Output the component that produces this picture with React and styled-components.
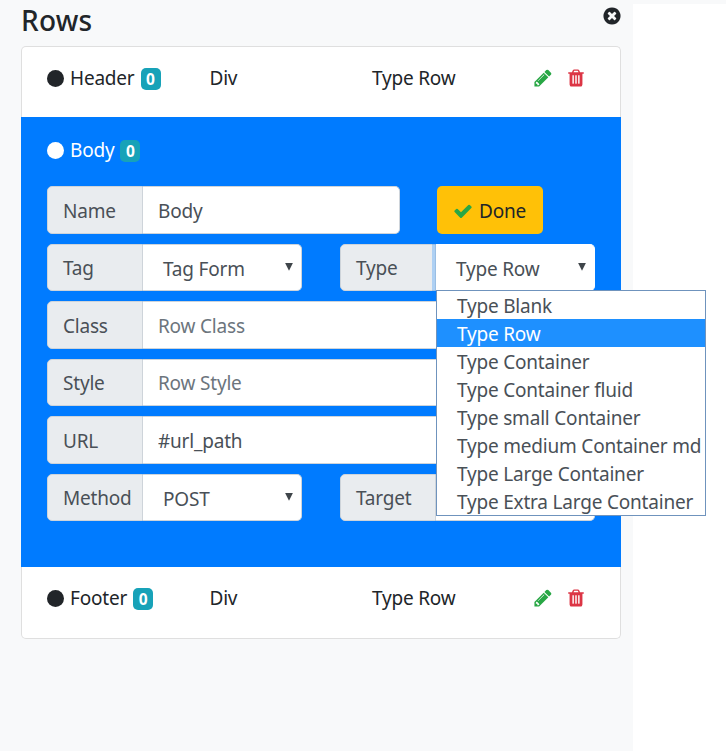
import styled, { createGlobalStyle, css } from "styled-components";

const GlobalStyle = createGlobalStyle`
  * {
    box-sizing: border-box;
  }

  body {
    margin: 0;
    background: #fff;
    border-top: 4px solid #f8f9fa;
    overflow: hidden;
    color: #212529;
    font-family: "Noto Sans", "Open Sans", sans-serif;
    font-size: 19px;
    line-height: 30px;
    letter-spacing: -0.2px;
  }
`;

// Light sidebar that holds the list of rows
const Panel = styled.aside`
  width: 633px;
  height: 747px;
  padding: 0 12px 0 21px;
  background: #f8f9fa;
`;

const PanelHead = styled.header`
  display: flex;
  justify-content: space-between;
  height: 42px;
  padding-top: 2px;
`;

const Title = styled.h4`
  margin: 0;
  font-size: 28px;
  font-weight: 500;
  line-height: 28px;
  letter-spacing: 0.2px;
`;

const Glyph = styled.svg`
  display: block;
  flex: none;
  width: 20px;
  height: 20px;
  fill: ${(props) => props.$color || "currentColor"};
`;

const IconButton = styled.button`
  display: block;
  margin: 0;
  padding: 0;
  border: 0;
  background: none;
  color: inherit;
`;

const CloseButton = styled(IconButton)`
  align-self: flex-start;
  margin-right: -1px;
`;

const List = styled.ul`
  margin: 0;
  padding: 0;
  list-style: none;
`;

const Item = styled.li`
  height: 72px;
  padding: 16px 25px;
  background: #fff;
  border: 1px solid #dfdfdf;

  &:first-child {
    height: 71px;
    border-bottom: 0;
    border-radius: 5px 5px 0 0;
  }

  &:last-child {
    border-top: 0;
    border-radius: 0 0 5px 5px;
  }

  ${(props) =>
    props.$active &&
    css`
      height: 450px;
      padding: 17px 25px;
      background: #007bff;
      border-color: #007bff;
      color: #fff;
    `}
`;

const Summary = styled.div`
  display: grid;
  grid-template-columns: 162.5px 162.5px 161px 33px 1fr;
  align-items: center;
  height: 30px;
`;

const Name = styled.div`
  display: flex;
  align-items: center;
`;

const Dot = styled.span`
  width: 17px;
  height: 17px;
  margin-right: 6px;
  border-radius: 50%;
  background: currentColor;
`;

const Badge = styled.span`
  width: 20px;
  height: 22px;
  margin: 2px 0 0 6px;
  border-radius: 5px;
  background: #17a2b8;
  color: #fff;
  font-size: 15.5px;
  font-weight: 700;
  line-height: 22px;
  text-align: center;
  letter-spacing: 0;
`;

const Form = styled.form`
  display: flex;
  flex-direction: column;
  gap: 10px;
  margin-top: 21px;
`;

const FormLine = styled.div`
  display: flex;
  gap: ${(props) => props.$gap || 38}px;
`;

const Group = styled.div`
  position: relative;
  display: flex;
  flex: ${(props) => (props.$width ? "none" : 1)};
  width: ${(props) => (props.$width ? `${props.$width}px` : "auto")};
  height: 47.5px;
`;

const Label = styled.label`
  display: flex;
  align-items: center;
  flex: none;
  width: 96px;
  padding: 2px 0 0 15px;
  border: 1px solid #ced4da;
  border-radius: 5px 0 0 5px;
  background: #e9ecef;
  color: #495057;
`;

const Input = styled.input`
  flex: 1;
  min-width: 0;
  padding: 2px 15px 0;
  border: 1px solid #ced4da;
  border-left: 0;
  border-radius: 0 5px 5px 0;
  background: #fff;
  color: #495057;
  font: inherit;
  letter-spacing: inherit;

  &::placeholder {
    color: #6c757d;
    opacity: 1;
  }
`;

// Closed select box, ringed while its menu is open
const Select = styled.div`
  display: flex;
  flex: 1;
  align-items: center;
  justify-content: space-between;
  padding: 3px 8px 0 20px;
  border: 1px solid ${(props) => (props.$open ? "#fff" : "#ced4da")};
  border-left: 0;
  border-radius: 0 5px 5px 0;
  background: #fff;
  color: #495057;
  box-shadow: ${(props) => (props.$open ? "0 0 0 4px rgba(0, 123, 255, 0.25)" : "none")};
`;

const Arrow = styled.span`
  width: 8px;
  height: 8px;
  margin-top: -4px;
  background: #3f454a;
  clip-path: polygon(0 0, 100% 0, 50% 100%);
`;

const Done = styled.button`
  display: flex;
  align-items: center;
  gap: 6px;
  width: 106px;
  height: 47.5px;
  margin: 0;
  padding: 2px 0 0 16px;
  border: 0;
  border-radius: 5px;
  background: #ffc107;
  color: #212529;
  font: inherit;
  letter-spacing: inherit;
`;

const Menu = styled.ul`
  position: absolute;
  z-index: 2;
  top: 46px;
  left: 96px;
  width: 270px;
  margin: 0;
  padding: 0;
  border: 1px solid #6f93bd;
  background: #fff;
  color: #495057;
  list-style: none;
`;

const Option = styled.li`
  height: 28px;
  padding: 1px 0 0 20px;
  line-height: 28px;
  white-space: nowrap;
  ${(props) => props.$selected && "background: #1e90ff; color: #fff;"}
`;

const paths = {
  close:
    "M1277 1122q0-26-19-45l-181-181 181-181q19-19 19-45 0-27-19-46l-90-90q-19-19-46-19-26 0-45 19l-181 181-181-181q-19-19-45-19-27 0-46 19l-90 90q-19 19-19 46 0 26 19 45l181 181-181 181q-19 19-19 45 0 27 19 46l90 90q19 19 46 19 26 0 45-19l181-181 181 181q19 19 45 19 27 0 46-19l90-90q19-19 19-46zm387-226q0 209-103 385.5t-279.5 279.5-385.5 103-385.5-103-279.5-279.5-103-385.5 103-385.5 279.5-279.5 385.5-103 385.5 103 279.5 279.5 103 385.5z",
  pencil:
    "M491 1536l91-91-235-235-91 91v107h128v128h107zm523-928q0-22-22-22-10 0-17 7l-542 542q-7 7-7 17 0 22 22 22 10 0 17-7l542-542q7-7 7-17zm-54-192l416 416-832 832h-416v-416zm683 96q0 53-37 90l-166 166-416-416 166-165q36-38 90-38 53 0 91 38l235 234q37 39 37 91z",
  trash:
    "M704 1376v-704q0-14-9-23t-23-9h-64q-14 0-23 9t-9 23v704q0 14 9 23t23 9h64q14 0 23-9t9-23zm256 0v-704q0-14-9-23t-23-9h-64q-14 0-23 9t-9 23v704q0 14 9 23t23 9h64q14 0 23-9t9-23zm256 0v-704q0-14-9-23t-23-9h-64q-14 0-23 9t-9 23v704q0 14 9 23t23 9h64q14 0 23-9t9-23zm-544-992h448l-48-117q-7-9-17-11h-317q-10 2-17 11zm928 32v64q0 14-9 23t-23 9h-96v948q0 83-47 143.5t-113 60.5h-832q-66 0-113-58.5t-47-141.5v-952h-96q-14 0-23-9t-9-23v-64q0-14 9-23t23-9h309l70-167q15-37 54-63t79-26h320q40 0 79 26t54 63l70 167h309q14 0 23 9t9 23z",
  check:
    "M1671 566q0 40-28 68l-724 724-136 136q-28 28-68 28t-68-28l-136-136-362-362q-28-28-28-68t28-68l136-136q28-28 68-28t68 28l294 295 656-657q28-28 68-28t68 28l136 136q28 28 28 68z",
};

const types = [
  "Type Blank",
  "Type Row",
  "Type Container",
  "Type Container fluid",
  "Type small Container",
  "Type medium Container md",
  "Type Large Container",
  "Type Extra Large Container",
];

const Icon = ({ name, color }) => (
  <Glyph viewBox="0 0 1792 1792" $color={color}>
    <path d={paths[name]} />
  </Glyph>
);

const RowName = ({ children }) => (
  <Name>
    <Dot />
    {children}
    <Badge>0</Badge>
  </Name>
);

const RowItem = ({ name }) => (
  <Item>
    <Summary>
      <RowName>{name}</RowName>
      <span>Div</span>
      <span>Type Row</span>
      <IconButton>
        <Icon name="pencil" color="#28a745" />
      </IconButton>
      <IconButton>
        <Icon name="trash" color="#dc3545" />
      </IconButton>
    </Summary>
  </Item>
);

const TextField = ({ label, width, ...rest }) => (
  <Group $width={width}>
    <Label>{label}</Label>
    <Input {...rest} />
  </Group>
);

const SelectField = ({ label, value, options }) => (
  <Group>
    <Label>{label}</Label>
    <Select $open={Boolean(options)}>
      {value}
      <Arrow />
    </Select>
    {options && (
      <Menu>
        {options.map((option) => (
          <Option key={option} $selected={option === value}>
            {option}
          </Option>
        ))}
      </Menu>
    )}
  </Group>
);

const App = () => (
  <>
    <GlobalStyle />
    <Panel>
      <PanelHead>
        <Title>Rows</Title>
        <CloseButton>
          <Icon name="close" />
        </CloseButton>
      </PanelHead>
      <List>
        <RowItem name="Header" />
        <Item $active>
          <RowName>Body</RowName>
          <Form>
            <FormLine $gap={37}>
              <TextField label="Name" width={353} defaultValue="Body" />
              <Done type="button">
                <Icon name="check" color="#28a745" />
                Done
              </Done>
            </FormLine>
            <FormLine>
              <SelectField label="Tag" value="Tag Form" />
              <SelectField label="Type" value="Type Row" options={types} />
            </FormLine>
            <FormLine>
              <TextField label="Class" placeholder="Row Class" />
            </FormLine>
            <FormLine>
              <TextField label="Style" placeholder="Row Style" />
            </FormLine>
            <FormLine>
              <TextField label="URL" defaultValue="#url_path" />
            </FormLine>
            <FormLine>
              <SelectField label="Method" value="POST" />
              <SelectField label="Target" value="" />
            </FormLine>
          </Form>
        </Item>
        <RowItem name="Footer" />
      </List>
    </Panel>
  </>
);

export default App;
